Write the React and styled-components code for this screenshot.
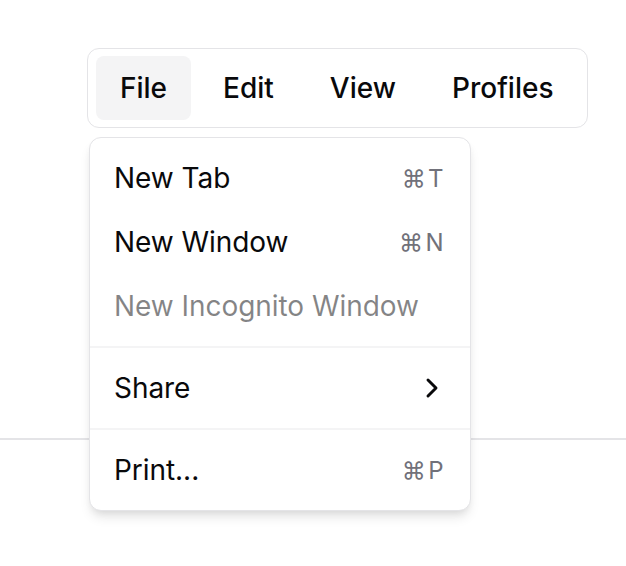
import styled, { createGlobalStyle } from "styled-components";
import { ChevronRight } from "lucide-react";

const GlobalStyle = createGlobalStyle`
  body {
    margin: 0;
    background: #ffffff;
    font-family: Inter, "Noto Sans", sans-serif;
    color: #09090b;
  }
`;

const Page = styled.div`
  padding-top: 48px;
  padding-left: 87px;
  min-height: 566px;
  box-sizing: border-box;
`;

const Menubar = styled.div`
  position: relative;
  display: inline-flex;
  align-items: center;
  gap: 8px;
  height: 80px;
  padding: 0 10px 0 8px;
  box-sizing: border-box;
  border: 1.5px solid #e4e4e7;
  border-radius: 12px;
  background: #fff;
`;

const Trigger = styled.div`
  height: 64px;
  padding: 0 24px;
  display: flex;
  align-items: center;
  border-radius: 8px;
  font-size: 28px;
  font-weight: 500;
  background: ${(p) => (p.$open ? "#f4f4f5" : "transparent")};
`;

const Content = styled.div`
  position: absolute;
  left: 1px;
  top: 88px;
  width: 382px;
  box-sizing: border-box;
  padding: 8px;
  border: 1.5px solid #e4e4e7;
  border-radius: 12px;
  background: #fff;
  box-shadow: 0 8px 12px -2px rgba(0, 0, 0, 0.1), 0 4px 8px -4px rgba(0, 0, 0, 0.1);
  z-index: 2;
`;

const Item = styled.div`
  display: flex;
  align-items: center;
  height: 64px;
  padding: 0 16px;
  border-radius: 6px;
  font-size: 28px;
  letter-spacing: -0.05px;
  color: ${(p) => (p.$disabled ? "rgba(9, 9, 11, 0.5)" : "#09090b")};
`;

const Shortcut = styled.span`
  margin-left: auto;
  font-size: 24px;
  letter-spacing: 0.1em;
  color: #71717a;
`;

const Chevron = styled(ChevronRight)`
  margin-left: auto;
  margin-right: -2px;
`;

const Separator = styled.div`
  height: 2px;
  margin: 8px -8px;
  background: #f4f4f5;
`;

const Rule = styled.div`
  margin-top: 310px;
  margin-left: -87px;
  height: 2px;
  background: #e4e4e7;
`;

export default function App() {
  return (
    <>
      <GlobalStyle />
      <Page>
        <Menubar>
          <Trigger $open>File</Trigger>
          <Trigger>Edit</Trigger>
          <Trigger>View</Trigger>
          <Trigger>Profiles</Trigger>
          <Content>
            <Item>
              New Tab <Shortcut>⌘T</Shortcut>
            </Item>
            <Item>
              New Window <Shortcut>⌘N</Shortcut>
            </Item>
            <Item $disabled>New Incognito Window</Item>
            <Separator />
            <Item>
              Share <Chevron size={32} strokeWidth={2.2} />
            </Item>
            <Separator />
            <Item>
              Print... <Shortcut>⌘P</Shortcut>
            </Item>
          </Content>
        </Menubar>
        <Rule />
      </Page>
    </>
  );
}
